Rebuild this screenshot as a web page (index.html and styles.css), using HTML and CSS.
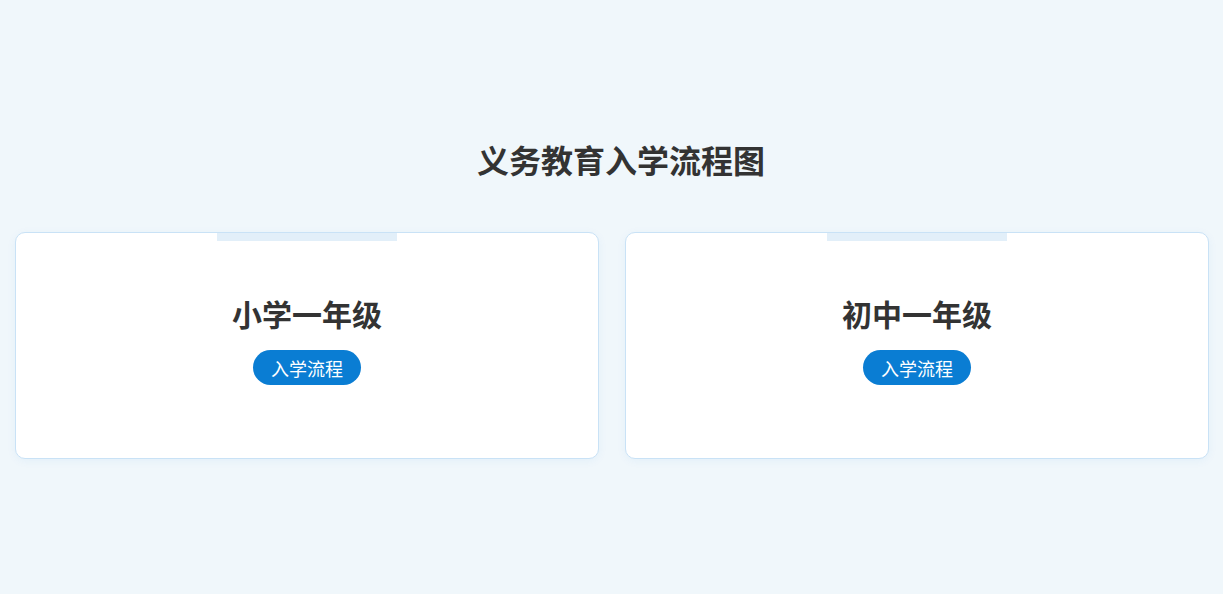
FILE: index.html
```html
<!DOCTYPE html>
<html lang="zh">
<head>
  <meta charset="UTF-8">
  <meta name="viewport" content="width=device-width, initial-scale=1.0">
  <title>义务教育入学流程图</title>
  <link rel="stylesheet" href="styles.css">
</head>
<body>

  <h1 class="page-title">义务教育入学流程图</h1>

  <!-- 两个学段入口 -->
  <div class="stage-list">
    <div class="stage-card">
      <div class="stage-tab"></div>
      <h3>小学一年级</h3>
      <button class="flow-button">入学流程</button>
    </div>
    <div class="stage-card">
      <div class="stage-tab"></div>
      <h3>初中一年级</h3>
      <button class="flow-button">入学流程</button>
    </div>
  </div>

</body>
</html>
```

FILE: styles.css
```css
* {
  margin: 0;
  padding: 0;
  box-sizing: border-box;
}

body {
  font-family: "Liberation Sans", "Noto Sans CJK SC", sans-serif;
  min-height: 100vh;
  background-color: #f0f7fb;
  display: flex;
  flex-direction: column;
  align-items: center;
  justify-content: center;
  padding: 7px 14px 0 15px;
  color: #333;
}

.page-title {
  font-size: 32px;
  font-weight: 700;
  line-height: 40px;
  margin-bottom: 50px;
  padding-left: 18px;
}

.stage-list {
  display: flex;
  gap: 26px;
  width: 100%;
}

.stage-card {
  flex: 1;
  height: 227px;
  background-color: #fff;
  border: 1px solid #c9e2f6;
  border-radius: 10px;
  box-shadow: 0 2px 10px rgba(0, 120, 215, 0.06);
  display: flex;
  flex-direction: column;
  align-items: center;
}

.stage-tab {
  width: 180px;
  height: 8px;
  background-color: #e2eff9;
  margin-bottom: 55px;
}

.stage-card h3 {
  font-size: 30px;
  font-weight: 700;
  line-height: 40px;
  margin-bottom: 14px;
}

.flow-button {
  font-family: inherit;
  font-size: 18px;
  color: #fff;
  background-color: #0a7dd3;
  border: none;
  border-radius: 18px;
  width: 108px;
  height: 35px;
  cursor: pointer;
}
```
